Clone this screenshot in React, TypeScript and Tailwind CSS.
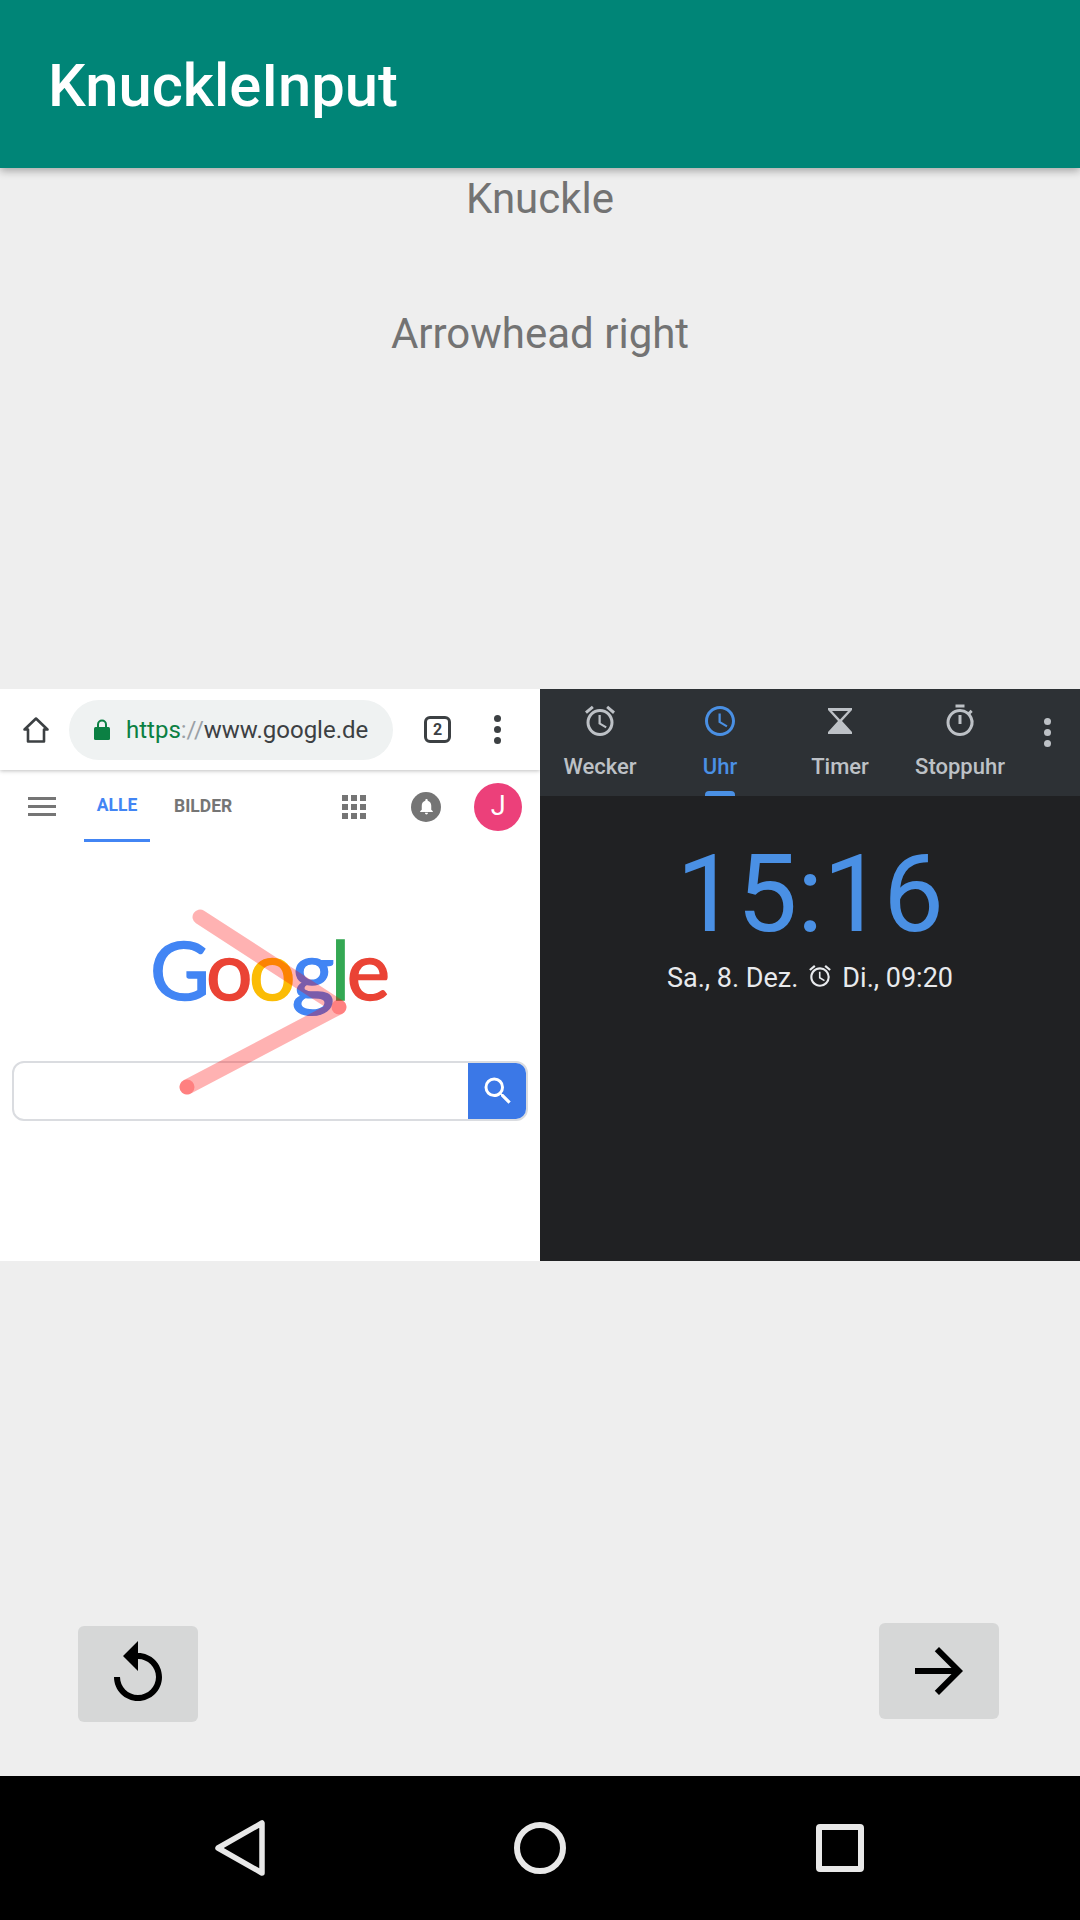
import { MdArrowForward, MdReplay, MdOutlineAccessAlarm, MdOutlineAccessTime, MdOutlineTimer, MdSearch, MdNotifications } from 'react-icons/md'

const roboto = 'font-["Roboto",sans-serif]'

function ClockTab({ icon, label, active }: { icon: React.ReactNode; label: string; active?: boolean }) {
  return (
    <div className={`relative w-[120px] h-full flex flex-col items-center pt-[14px] ${active ? 'text-[#4a90e4]' : 'text-[#bdc1c6]'}`}>
      <div className="w-[36px] h-[36px] flex items-center justify-center">{icon}</div>
      <span className="mt-[14px] text-[22px] leading-[28px] font-medium">{label}</span>
      {active && <div className="absolute bottom-0 left-[45px] w-[30px] h-[5px] rounded-t-[4px] bg-[#4a90e4]" />}
    </div>
  )
}

function Dots({ color }: { color: string }) {
  return (
    <div className="flex flex-col gap-[4px]">
      <div className={`w-[7px] h-[7px] rounded-full ${color}`} />
      <div className={`w-[7px] h-[7px] rounded-full ${color}`} />
      <div className={`w-[7px] h-[7px] rounded-full ${color}`} />
    </div>
  )
}

function BrowserShot() {
  return (
    <div className="relative w-[540px] h-full bg-white overflow-hidden">
      {/* chrome toolbar */}
      <div className="h-[81px] flex items-center shadow-[0_1px_4px_rgba(0,0,0,0.25)] relative">
        <svg viewBox="0 0 28 28" className="ml-[22px] w-[28px] h-[28px] text-[#3c4043]" fill="none" stroke="currentColor" strokeWidth="2.6" strokeLinejoin="round">
          <path d="M14 2.5 L25.5 13.5 H22 V25.5 H6 V13.5 H2.5 Z" />
        </svg>
        <div className="ml-[19px] w-[324px] h-[60px] rounded-full bg-[#eff2f2] flex items-center pl-[25px]">
          <svg viewBox="0 0 16 21" className="w-[16px] h-[21px]" fill="#0b8043">
            <path d="M3 8.5 V5.5 a5 5 0 0 1 10 0 V8.5 H11 V5.5 a3 3 0 0 0 -6 0 V8.5 Z" />
            <rect x="0" y="8" width="16" height="13" rx="1.5" />
          </svg>
          <span className={`ml-[16px] text-[24px] leading-none whitespace-nowrap ${roboto}`}>
            <span className="text-[#0b8043]">https</span>
            <span className="text-[#9aa0a6]">://</span>
            <span className="text-[#3c4043]">www.google.de</span>
          </span>
        </div>
        <div className={`ml-[31px] w-[27px] h-[27px] rounded-[6px] border-[3px] border-[#3c4043] flex items-center justify-center text-[16px] font-bold text-[#3c4043] ${roboto}`}>2</div>
        <div className="ml-[43px]">
          <Dots color="bg-[#3c4043]" />
        </div>
      </div>

      {/* google tabs */}
      <div className="h-[72px] relative flex items-center">
        <div className="ml-[28px] w-[28px] flex flex-col gap-[5px]">
          <div className="h-[3px] bg-[#757575]" />
          <div className="h-[3px] bg-[#757575]" />
          <div className="h-[3px] bg-[#757575]" />
        </div>
        <div className={`ml-[28px] w-[66px] h-full flex items-center justify-center pt-[2px] text-[17.5px] font-bold text-[#4285f4] border-b-[3px] border-[#4285f4] ${roboto}`}>ALLE</div>
        <div className={`ml-[24px] pt-[1px] text-[17.5px] font-bold text-[#757575] ${roboto}`}>BILDER</div>
        <div className="ml-[110px] grid grid-cols-3 gap-[3px] pt-[1px]">
          {Array.from({ length: 9 }).map((_, i) => (
            <div key={i} className="w-[6px] h-[6px] bg-[#757575]" />
          ))}
        </div>
        <div className="ml-[45px] mt-[1px] w-[30px] h-[30px] rounded-full bg-[#757575] flex items-center justify-center">
          <MdNotifications className="w-[19px] h-[19px] text-white" />
        </div>
        <div className={`ml-[33px] mt-[1px] w-[48px] h-[48px] rounded-full bg-[#ec407a] flex items-center justify-center text-white text-[27px] ${roboto}`}>J</div>
      </div>

      {/* logo */}
      <div className="mt-[76px] ml-[150px] h-[100px] font-['Lato',sans-serif] text-[82px] leading-[100px] font-normal tracking-[-3.5px] [-webkit-text-stroke:1.5px] whitespace-nowrap">
        <span className="text-[#4285f4]">G</span>
        <span className="text-[#ea4335]">o</span>
        <span className="text-[#fbbc05]">o</span>
        <span className="text-[#4285f4]">g</span>
        <span className="text-[#34a853]">l</span>
        <span className="text-[#ea4335]">e</span>
      </div>

      {/* search box */}
      <div className="absolute left-[12px] top-[372px] w-[516px] h-[60px] flex rounded-[12px] border-2 border-[#dadce0] overflow-hidden">
        <div className="flex-1" />
        <div className="-my-[2px] -mr-[2px] w-[60px] bg-[#3b78e7] flex items-center justify-center">
          <MdSearch className="w-[36px] h-[36px] text-white" />
        </div>
      </div>

      {/* gesture trace */}
      <svg className="absolute inset-0 w-[540px] h-[571px]" viewBox="0 0 540 571" fill="none">
        <path d="M200 228 L339 318 L187 398" stroke="#ff0000" strokeOpacity="0.3" strokeWidth="15" strokeLinecap="round" strokeLinejoin="round" />
        <circle cx="339" cy="318" r="7.5" fill="#ff0000" fillOpacity="0.28" />
        <circle cx="187" cy="398" r="7.5" fill="#ff0000" fillOpacity="0.28" />
      </svg>
    </div>
  )
}

function ClockShot() {
  return (
    <div className={`w-[540px] h-full bg-[#202123] flex flex-col ${roboto}`}>
      <div className="h-[107px] bg-[#2d3135] flex items-start">
        <ClockTab label="Wecker" icon={<MdOutlineAccessAlarm className="w-[36px] h-[36px]" />} />
        <ClockTab label="Uhr" active icon={<MdOutlineAccessTime className="w-[36px] h-[36px]" />} />
        <ClockTab
          label="Timer"
          icon={
            <svg viewBox="0 0 24 26" className="w-[24px] h-[26px]" fill="currentColor">
              <path d="M0 0 H24 V2 L14 13 L24 24 V26 H0 V24 L10 13 L0 2 Z M4 3 L12 11.5 L20 3 Z" fillRule="evenodd" />
            </svg>
          }
        />
        <ClockTab label="Stoppuhr" icon={<MdOutlineTimer className="w-[36px] h-[36px]" />} />
        <div className="ml-[24px] mt-[29px]">
          <Dots color="bg-[#bdc1c6]" />
        </div>
      </div>
      <div className="mt-[34px] text-center text-[108px] leading-[128px] text-[#4a90e4] tracking-[-0.3px]">15:16</div>
      <div className="mt-[2px] flex items-center justify-center text-[27px] leading-[36px] text-[#e8eaed]">
        <span>Sa., 8. Dez.</span>
        <MdOutlineAccessAlarm className="mx-[9px] w-[26px] h-[26px] -mt-[5px]" />
        <span>Di., 09:20</span>
      </div>
    </div>
  )
}

export default function App() {
  return (
    <div className={`w-[1080px] h-[1920px] flex flex-col bg-[#eeeeee] overflow-hidden ${roboto}`}>
      <header className="relative z-10 h-[168px] shrink-0 bg-[#008577] flex items-center pl-[48px] pt-[5px] shadow-[0_3px_8px_rgba(0,0,0,0.3)]">
        <h1 className="text-[59.7px] leading-none font-medium text-white">KnuckleInput</h1>
      </header>

      <main className="flex-1 flex flex-col">
        <div className="h-[60px] flex items-center justify-center text-[42px] text-[#737373]">Knuckle</div>
        <div className="mt-[75px] h-[60px] flex items-center justify-center text-[42px] text-[#737373]">Arrowhead right</div>

        <div className="mt-[326px] h-[572px] flex">
          <BrowserShot />
          <ClockShot />
        </div>

        <div className="flex-1 flex justify-between items-start pl-[78px] pr-[81px] pt-[362px]">
          <button className="mt-[3px] w-[120px] h-[96px] rounded-[6px] bg-[#d6d7d7] flex items-center justify-center text-black">
            <MdReplay className="w-[72px] h-[72px]" />
          </button>
          <button className="w-[120px] h-[96px] rounded-[6px] bg-[#d6d7d7] flex items-center justify-center text-black">
            <MdArrowForward className="w-[72px] h-[72px]" />
          </button>
        </div>
      </main>

      <nav className="h-[144px] shrink-0 bg-black flex items-center pl-[213px]">
        <svg viewBox="0 0 54 60" className="w-[54px] h-[60px]" fill="none" stroke="#e8e8e8" strokeWidth="5.5" strokeLinejoin="round">
          <path d="M49 5 V55 L5 30 Z" />
        </svg>
        <div className="ml-[247px] w-[52px] h-[52px] rounded-full border-[6px] border-[#e8e8e8]" />
        <div className="ml-[250px] w-[48px] h-[48px] rounded-[4px] border-[6px] border-[#e8e8e8]" />
      </nav>
    </div>
  )
}
